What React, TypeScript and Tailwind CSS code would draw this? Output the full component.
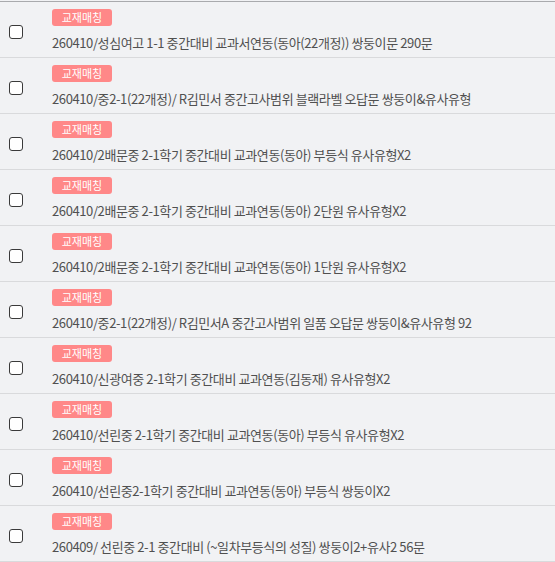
import React from "react";

const items = [
  "260410/성심여고 1-1 중간대비 교과서연동(동아(22개정)) 쌍둥이문 290문",
  "260410/중2-1(22개정)/ R김민서 중간고사범위 블랙라벨 오답문 쌍둥이&유사유형",
  "260410/2배문중 2-1학기 중간대비 교과연동(동아) 부등식 유사유형X2",
  "260410/2배문중 2-1학기 중간대비 교과연동(동아) 2단원 유사유형X2",
  "260410/2배문중 2-1학기 중간대비 교과연동(동아) 1단원 유사유형X2",
  "260410/중2-1(22개정)/ R김민서A 중간고사범위 일품 오답문 쌍둥이&유사유형 92",
  "260410/신광여중 2-1학기 중간대비 교과연동(김동재) 유사유형X2",
  "260410/선린중 2-1학기 중간대비 교과연동(동아) 부등식 유사유형X2",
  "260410/선린중2-1학기 중간대비 교과연동(동아) 부등식 쌍둥이X2",
  "260409/ 선린중 2-1 중간대비 (~일차부등식의 성질) 쌍둥이2+유사2 56문",
];

export default function App() {
  return (
    <div
      className="w-[555px] h-[562px] overflow-hidden bg-[#f1f2f4] pt-[1px]"
      style={{ fontFamily: '"Noto Sans CJK KR", "Noto Sans", sans-serif' }}
    >
      <div className="border-t border-[#a9aaad]">
        {items.map((title, i) => (
          <div
            key={i}
            className="flex h-[56px] items-center border-b border-[#d9dadc]"
          >
            <div className="w-[52px] shrink-0 flex pl-[9px] pt-[5px]">
              <div className="w-[14px] h-[14px] rounded-[3px] border border-[#3a3a3a] bg-white" />
            </div>
            <div className="flex flex-col items-start">
              <span className="w-[60px] h-[17px] rounded-[3px] bg-[#ff8888] text-white text-[11px] leading-[17px] text-center">
                교재매칭
              </span>
              <span className="mt-[8px] text-[13px] leading-[17px] text-[#505050] tracking-[-0.4px] whitespace-nowrap">
                {title}
              </span>
            </div>
          </div>
        ))}
      </div>
    </div>
  );
}
